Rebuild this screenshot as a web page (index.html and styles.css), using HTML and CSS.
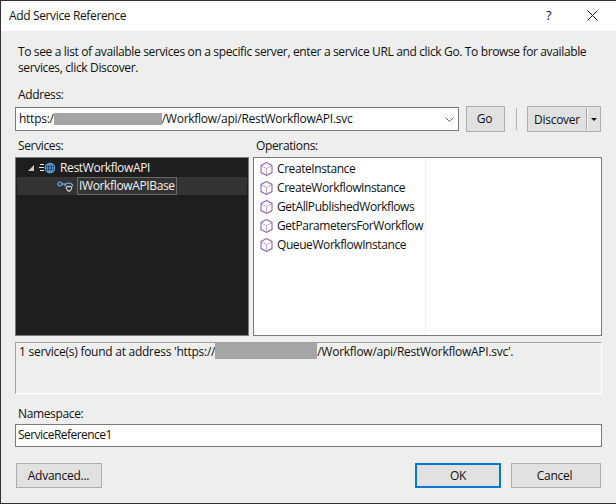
FILE: index.html
```html
<!DOCTYPE html>
<html lang="en">
<head>
<meta charset="utf-8">
<title>Add Service Reference</title>
<link rel="stylesheet" href="styles.css">
</head>
<body>
<div class="dialog">
  <header class="titlebar">
    <span class="title">Add Service Reference</span>
    <span class="help">?</span>
    <svg class="close" width="11" height="11" viewBox="0 0 11 11"><path d="M.5.5l10 10M10.5.5l-10 10" stroke="#1a1a1a" stroke-width="1" fill="none"/></svg>
  </header>
  <main class="content">
    <p class="intro">To see a list of available services on a specific server, enter a service URL and click Go. To browse for available services, click Discover.</p>
    <div class="label address-label">Address:</div>
    <div class="address-row">
      <div class="combo">
        <span class="value">https:/<span class="redact r1"></span>/Workflow/api/RestWorkflowAPI.svc</span>
        <svg width="9" height="5" viewBox="0 0 9 5"><path d="M.5.5l4 4 4-4" stroke="#666" fill="none"/></svg>
      </div>
      <button class="btn go">Go</button>
      <span class="sep"></span>
      <div class="btn split"><span class="split-main">Discover</span><span class="split-arrow"></span></div>
    </div>
    <div class="panes">
      <section class="pane services">
        <div class="label">Services:</div>
        <div class="tree">
          <div class="node root">
            <span class="expander"></span>
            <svg class="icon" width="16" height="12" viewBox="0 0 16 12"><path d="M1 2.500h4M0 5.500h5M1 8.500h4" stroke="#e6e6e6" fill="none"/><circle cx="11" cy="6" r="4.700" fill="#1e1e1e" stroke="#5aa6ea" stroke-width="1.200"/><path d="M6 6h10M11 1v10M7.500 3h7M7.500 9h7M11 1c-3.500 3-3.500 7 0 10M11 1c3.500 3 3.500 7 0 10" stroke="#5aa6ea" fill="none" stroke-width=".9"/></svg>
            <span>RestWorkflowAPI</span>
          </div>
          <div class="node child">
            <svg class="icon" width="17" height="14" viewBox="0 0 17 14"><circle cx="3" cy="5" r="2" fill="none" stroke="#6cb1ee" stroke-width="1.200"/><path d="M5 5h3" stroke="#6cb1ee" stroke-width="1.200"/><path d="M7.500 7a4.500 4.500 0 0 1 8.500 0" fill="none" stroke="#6cb1ee" stroke-width="1.200"/><path d="M9.500 8c1-1 2-.8 2.500 0 .5-.8 1.500-1 2.500 0 .8 1.200 0 2.500-2.500 4.500-2.500-2-3.300-3.300-2.500-4.500z" fill="#1e1e1e" stroke="#d0d0d0" stroke-width="1.200"/></svg>
            <span class="selected">IWorkflowAPIBase</span>
          </div>
        </div>
      </section>
      <section class="pane operations">
        <div class="label">Operations:</div>
        <div class="list">
          <ul class="ops">
            <li><svg class="cube" width="13" height="14" viewBox="0 0 13 14"><path d="M1 3.800l5.500 2.700 5.500-2.700M6.500 6.500v6.500" fill="none" stroke="#c3aed6"/><path d="M6.500.6l5.500 2.800v7.200l-5.500 2.800-5.500-2.800v-7.200z" fill="none" stroke="#8f66b2" stroke-width="1.100"/></svg>CreateInstance</li>
            <li><svg class="cube" width="13" height="14" viewBox="0 0 13 14"><path d="M1 3.800l5.500 2.700 5.500-2.700M6.500 6.500v6.500" fill="none" stroke="#c3aed6"/><path d="M6.500.6l5.500 2.800v7.200l-5.500 2.800-5.500-2.800v-7.200z" fill="none" stroke="#8f66b2" stroke-width="1.100"/></svg>CreateWorkflowInstance</li>
            <li><svg class="cube" width="13" height="14" viewBox="0 0 13 14"><path d="M1 3.800l5.500 2.700 5.500-2.700M6.500 6.500v6.500" fill="none" stroke="#c3aed6"/><path d="M6.500.6l5.500 2.800v7.200l-5.500 2.800-5.500-2.800v-7.200z" fill="none" stroke="#8f66b2" stroke-width="1.100"/></svg>GetAllPublishedWorkflows</li>
            <li><svg class="cube" width="13" height="14" viewBox="0 0 13 14"><path d="M1 3.800l5.500 2.700 5.500-2.700M6.500 6.500v6.500" fill="none" stroke="#c3aed6"/><path d="M6.500.6l5.500 2.800v7.200l-5.500 2.800-5.500-2.800v-7.200z" fill="none" stroke="#8f66b2" stroke-width="1.100"/></svg>GetParametersForWorkflow</li>
            <li><svg class="cube" width="13" height="14" viewBox="0 0 13 14"><path d="M1 3.800l5.500 2.700 5.500-2.700M6.500 6.500v6.500" fill="none" stroke="#c3aed6"/><path d="M6.500.6l5.500 2.800v7.200l-5.500 2.800-5.500-2.800v-7.200z" fill="none" stroke="#8f66b2" stroke-width="1.100"/></svg>QueueWorkflowInstance</li>
          </ul>
        </div>
      </section>
    </div>
    <div class="status">1 service(s) found at address 'https://<span class="redact r2"></span>/Workflow/api/RestWorkflowAPI.svc'.</div>
    <div class="label namespace-label">Namespace:</div>
    <div class="namespace">ServiceReference1</div>
    <footer class="actions">
      <button class="btn advanced">Advanced...</button>
      <span class="spacer"></span>
      <button class="btn ok">OK</button>
      <button class="btn cancel">Cancel</button>
    </footer>
  </main>
</div>
</body>
</html>
```
FILE: styles.css
```css
* { box-sizing: border-box; }
html, body { margin: 0; padding: 0; }
body {
  width: 616px;
  height: 504px;
  overflow: hidden;
  background: #333;
  font: 12px/16px "Open Sans", "Noto Sans", sans-serif;
  letter-spacing: -0.36px;
  color: #111;
}
.dialog {
  margin: 1px 0 1px 1px;
  height: 502px;
  display: flex;
  flex-direction: column;
}
.titlebar {
  height: 30px;
  flex: none;
  background: #fff;
  display: flex;
  align-items: center;
  padding: 0 0 0 8px;
}
.title { flex: 1; }
.help { width: 12px; margin-right: 29px; font-size: 13px; margin-top: -2px; }
.close { margin-right: 18px; margin-top: -2px; }
.content {
  flex: 1;
  background: #eeeeee;
  padding: 13px 14px 0 14px;
  display: flex;
  flex-direction: column;
}
.intro { margin: 0 0 0 3px; width: 570px; line-height: 16px; }
.label { margin-left: 3px; height: 16px; }
.address-label { margin-top: 11px; }
.address-row {
  margin-top: 3px;
  height: 26px;
  display: flex;
  align-items: center;
  letter-spacing: -0.26px;
}
.combo {
  width: 444px;
  height: 24px;
  background: #fff;
  border: 1px solid #7a7a7a;
  display: flex;
  align-items: center;
  justify-content: space-between;
  padding: 0 4px 0 3px;
}
.redact { display: inline-block; height: 12px; background: #a5a5a5; vertical-align: -2px; }
.r1 { width: 108px; }
.r2 { width: 102px; height: 16px; vertical-align: -3px; }
.btn {
  font: inherit;
  letter-spacing: -0.26px;
  color: inherit;
  background: #e1e1e1;
  border: 1px solid #adadad;
  padding: 0;
  text-align: center;
}
.go { width: 39px; height: 26px; margin-left: 7px; padding-right: 2px; }
.sep { width: 1px; height: 22px; background: #b5b5b5; margin: 0 10px 0 11px; }
.split { width: 74px; height: 26px; display: flex; align-items: center; }
.split-main {
  flex: 1;
  line-height: 16px;
  height: 22px;
  padding-top: 4px;
  border-right: 1px solid #a8a8a8;
  box-shadow: 1px 0 0 #f6f6f6;
}
.split-arrow {
  width: 13px;
  display: flex;
  justify-content: center;
}
.split-arrow::before {
  content: "";
  border: 3.5px solid transparent;
  border-top: 3.5px solid #111;
  border-bottom: 0;
}
.panes { display: flex; margin-top: 6px; gap: 4px; height: 198px; }
.pane { display: flex; flex-direction: column; }
.services { width: 234px; }
.operations { width: 349px; }
.tree {
  margin-top: 3px;
  flex: 1;
  background: #1e1e1e;
  border: 1px solid #7a7a7a;
  color: #f1f1f1;
  padding: 1px;
}
.node { height: 18px; display: flex; align-items: center; }
.root { padding-left: 11px; }
.expander {
  width: 0; height: 0; margin-right: 5px;
  border-style: solid;
  border-width: 0 0 6px 6px;
  border-color: transparent transparent #c8c8c8 transparent;
}
.root .icon { margin-right: 5px; }
.child { background: #333; padding-left: 40px; height: 18px; }
.child .icon { margin-right: 3px; }
.selected { border: 1px solid #6a6a6a; padding: 0 1px; height: 18px; line-height: 16px; }
.list {
  margin-top: 3px;
  flex: 1;
  background: #fff;
  border: 1px solid #7a7a7a;
}
.ops {
  list-style: none;
  margin: 0;
  padding: 1px 0 0 6px;
  width: 172px;
  height: 100%;
  border-right: 1px solid #e8f0f8;
  white-space: nowrap;
  letter-spacing: -0.42px;
}
.ops li { height: 19px; display: flex; align-items: center; gap: 4px; }
.status {
  margin-top: 6px;
  height: 52px;
  padding: 0 3px;
  border: 1px solid;
  border-color: #a0a0a0 #fff #fff #a0a0a0;
  letter-spacing: -0.26px;
}
.namespace-label { margin-top: 12px; }
.namespace {
  margin-top: 2px;
  height: 23px;
  background: #fff;
  border: 1px solid #7a7a7a;
  padding: 2px;
  letter-spacing: -0.54px;
}
.actions { display: flex; margin-top: 16px; padding: 0 1px; height: 25px; }
.spacer { flex: 1; }
.advanced { width: 86px; padding-right: 1px; }
.ok { width: 86px; border: 2px solid #0078d7; }
.cancel { width: 90px; margin-left: 10px; padding-right: 3px; }
```
